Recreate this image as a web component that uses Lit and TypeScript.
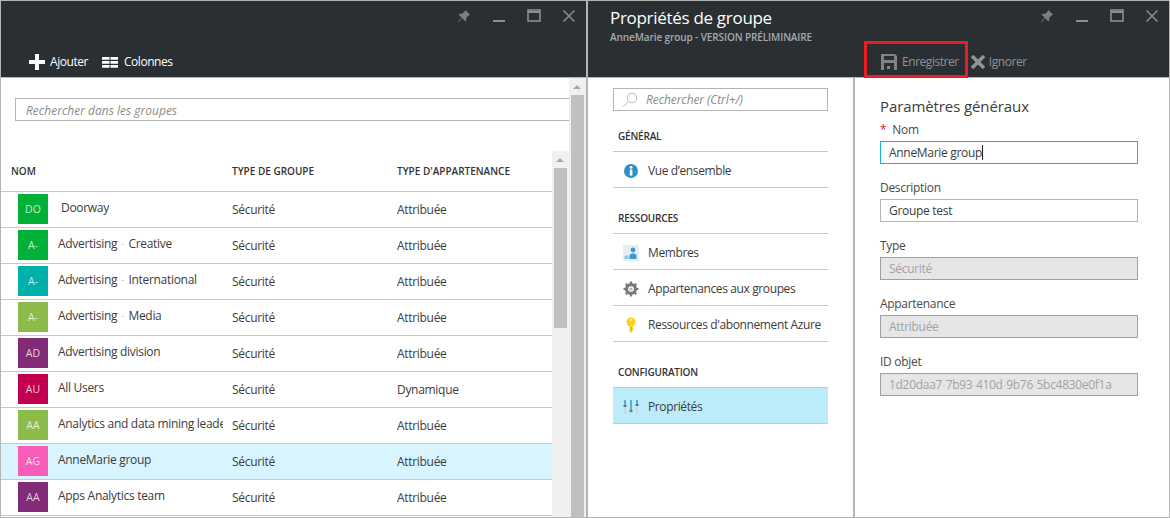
import { LitElement, css, html } from 'lit'
import { customElement } from 'lit/decorators.js'

interface Group {
  initials: string
  color: string
  name: string
  membership: string
  lead?: boolean
  selected?: boolean
}

const GROUPS: Group[] = [
  { initials: 'DO', color: '#00b137', name: 'Doorway', membership: 'Attribuée', lead: true },
  { initials: 'A-', color: '#00b137', name: 'Advertising - Creative', membership: 'Attribuée' },
  { initials: 'A-', color: '#00b0ad', name: 'Advertising - International', membership: 'Attribuée' },
  { initials: 'A-', color: '#8dbb4b', name: 'Advertising - Media', membership: 'Attribuée' },
  { initials: 'AD', color: '#832a78', name: 'Advertising division', membership: 'Attribuée' },
  { initials: 'AU', color: '#c2004f', name: 'All Users', membership: 'Dynamique' },
  { initials: 'AA', color: '#8dbb4b', name: 'Analytics and data mining leaders', membership: 'Attribuée' },
  { initials: 'AG', color: '#f65cb8', name: 'AnneMarie group', membership: 'Attribuée', selected: true },
  { initials: 'AA', color: '#832a78', name: 'Apps Analytics team', membership: 'Attribuée' },
]

const windowControls = html`
  <div class="controls">
    <svg viewBox="0 0 16 16" width="14" height="14" fill="#7b8083">
      <polygon points="9.5,1 15,6.5 13.6,7 10.5,10 10.5,13 9.5,14 6,10.5 1.5,15 1,14.5 5.5,10 2,6.5 3,5.5 6,5.5 9,2.5" />
    </svg>
    <svg viewBox="0 0 14 14" width="14" height="14" fill="#8a8e91"><rect x="1" y="11" width="12" height="2" /></svg>
    <svg viewBox="0 0 14 14" width="14" height="14" fill="none" stroke="#8a8e91">
      <rect x="1" y="1" width="12" height="11" stroke-width="1.6" />
      <rect x="1" y="2" width="12" height="2" fill="#8a8e91" stroke="none" />
    </svg>
    <svg viewBox="0 0 14 14" width="14" height="14" stroke="#8a8e91" stroke-width="1.5">
      <path d="M1.5 1.5 12.5 12.5M12.5 1.5 1.5 12.5" />
    </svg>
  </div>
`

const scrollbar = (thumbHeight: string) => html`
  <div class="scroll">
    <div class="arrow"></div>
    <div class="thumb" style="height:${thumbHeight}"></div>
  </div>
`

const searchIcon = html`
  <svg viewBox="0 0 16 16" width="16" height="16" fill="none" stroke="#b9b9b9">
    <circle cx="10" cy="6" r="4.8" />
    <path d="M6.5 9.5 1 15" />
  </svg>
`

const navIcons = {
  info: html`
    <svg viewBox="0 0 16 16" width="16" height="16">
      <circle cx="8" cy="8" r="7" fill="#2f8fc8" />
      <rect x="6.8" y="6.6" width="2.6" height="6" fill="#fff" />
      <circle cx="8.1" cy="4.4" r="1.4" fill="#fff" />
    </svg>
  `,
  members: html`
    <svg viewBox="0 0 16 16" width="16" height="16">
      <rect width="16" height="16" fill="#e6eef3" />
      <circle cx="10" cy="5" r="2.4" fill="#3a9ad4" />
      <path d="M6.5 14V10l2-1.5h3l2 1.5v4z" fill="#3a9ad4" />
      <path d="M1.5 14v-2.5l1.5-1h1.5l1 1V14z" fill="#8cc4e4" />
    </svg>
  `,
  gear: html`
    <svg viewBox="0 0 16 16" width="16" height="16">
      <circle cx="8" cy="8" r="4.6" fill="none" stroke="#7a7a7a" stroke-width="3" />
      <path d="M8 .5v15M.5 8h15M2.7 2.7l10.6 10.6M13.3 2.7 2.7 13.3" stroke="#7a7a7a" stroke-width="2.2" />
      <circle cx="8" cy="8" r="2.8" fill="#fff" />
      <circle cx="8" cy="8" r="1.6" fill="#b5b5b5" />
    </svg>
  `,
  key: html`
    <svg viewBox="0 0 16 16" width="16" height="16">
      <circle cx="8" cy="5" r="4.5" fill="#fcd116" />
      <path d="M6.5 8h3v6.5L8 16l-1.5-1.5z" fill="#fcd116" />
      <rect x="7" y="2.2" width="2" height="1.6" fill="#fff4b0" />
      <rect x="8" y="10" width="1.5" height="3" fill="#d9a800" />
    </svg>
  `,
  sliders: html`
    <svg viewBox="0 0 16 16" width="16" height="16">
      <path d="M2 1v14M8 1v14M14 1v14" stroke="#c8d4da" stroke-width="1.5" />
      <path d="M2 1v6M8 1v10M14 1v5" stroke="#3a9ad4" stroke-width="1.5" />
      <path d="M.5 7h3M6.5 12h3M12.5 6h3" stroke="#555" stroke-width="1.5" />
    </svg>
  `,
}

// hyphens in the source render very faint, so they get their own span
const faintHyphens = (text: string, sep: string) =>
  text.split(sep).map((part, i) => (i === 0 ? part : html`<span class="faint">${sep}</span>${part}`))

@customElement('app-root')
export class AppRoot extends LitElement {
  private navSection(label: string, rows: { icon: unknown; text: string; active?: boolean }[]) {
    return html`
      <section class="nav-section">
        <div class="nav-label">${label}</div>
        ${rows.map(
          (r) => html`
            <div class="nav-row ${r.active ? 'active' : ''}">
              <span class="nav-icon">${r.icon}</span>${r.text}
            </div>
          `
        )}
      </section>
    `
  }

  private field(label: string, value: unknown, kind = '', required = false) {
    return html`
      <div class="field">
        <div class="field-label">${required ? html`<span class="req">*</span>` : ''}${label}</div>
        <div class="input ${kind}">${value}${kind === 'focus' ? html`<i class="caret"></i>` : ''}</div>
      </div>
    `
  }

  protected render() {
    return html`
      <div class="blade left">
        <header class="head">
          <div class="top">${windowControls}</div>
          <div class="commands">
            <div class="cmd white">
              <svg viewBox="0 0 16 16" width="16" height="16" fill="#fff"><path d="M6 0h4v6h6v4h-6v6H6v-6H0V6h6z" /></svg>
              Ajouter
            </div>
            <div class="cmd white wide">
              <svg viewBox="0 0 16 16" width="16" height="16" fill="#fff">
                <path d="M0 3h7.5v2.8H0zM8.5 3H16v2.8H8.5zM0 7h7.5v2.8H0zM8.5 7H16v2.8H8.5zM0 11h7.5v2.8H0zM8.5 11H16v2.8H8.5z" />
              </svg>
              Colonnes
            </div>
          </div>
        </header>
        <div class="list-body">
          <div class="list-main">
            <div class="list-search">Rechercher dans les groupes</div>
            <div class="table-wrap">
              <div class="table">
                <div class="grid thead">
                  <div class="th-name">NOM</div>
                  <div>TYPE DE GROUPE</div>
                  <div>TYPE D'APPARTENANCE</div>
                </div>
                ${GROUPS.map(
                  (g) => html`
                    <div class="grid row ${g.selected ? 'selected' : ''}">
                      <div class="name-cell">
                        <span class="avatar" style="background:${g.color}">${g.initials}</span>
                        <span class="name ${g.lead ? 'lead' : ''}">${faintHyphens(g.name, ' - ')}</span>
                      </div>
                      <div class="cell">Sécurité</div>
                      <div class="cell">${g.membership}</div>
                    </div>
                  `
                )}
              </div>
              ${scrollbar('160px')}
            </div>
          </div>
          ${scrollbar('100%')}
        </div>
      </div>

      <div class="blade right">
        <header class="head">
          <div class="top">
            <div class="titles">
              <div class="title">Propriétés de groupe</div>
              <div class="subtitle">AnneMarie group - VERSION PRÉLIMINAIRE</div>
            </div>
            ${windowControls}
          </div>
          <div class="commands props">
            <div class="cmd dim">
              <svg viewBox="0 0 16 16" width="16" height="16" fill="#7f8386" fill-rule="evenodd">
                <path d="M0 0h14l2 2v14H0zM3 2v4h10V2zM3 9v7h10V9zM6 12h3v3H6z" />
              </svg>
              Enregistrer
            </div>
            <div class="cmd dim ignore">
              <svg viewBox="0 0 16 16" width="16" height="16" stroke="#8f9396" stroke-width="3.6">
                <path d="M2 2 14 14M14 2 2 14" />
              </svg>
              Ignorer
            </div>
          </div>
          <div class="highlight"></div>
        </header>
        <div class="props-body">
          <nav class="nav">
            <div class="nav-search">${searchIcon}<span>Rechercher (Ctrl+/)</span></div>
            ${this.navSection('GÉNÉRAL', [{ icon: navIcons.info, text: 'Vue d’ensemble' }])}
            ${this.navSection('RESSOURCES', [
              { icon: navIcons.members, text: 'Membres' },
              { icon: navIcons.gear, text: 'Appartenances aux groupes' },
              { icon: navIcons.key, text: "Ressources d'abonnement Azure" },
            ])}
            ${this.navSection('CONFIGURATION', [{ icon: navIcons.sliders, text: 'Propriétés', active: true }])}
          </nav>
          <div class="form">
            <h2 class="form-title">Paramètres généraux</h2>
            ${this.field('Nom', 'AnneMarie group', 'focus', true)}
            ${this.field('Description', 'Groupe test')}
            ${this.field('Type', 'Sécurité', 'disabled')}
            ${this.field('Appartenance', 'Attribuée', 'disabled')}
            ${this.field('ID objet', faintHyphens('1d20daa7-7b93-410d-9b76-5bc4830e0f1a', '-'), 'disabled')}
          </div>
        </div>
      </div>
    `
  }

  static styles = css`
    :host {
      display: flex;
      box-sizing: border-box;
      width: 1170px;
      height: 518px;
      overflow: hidden;
      background: #fff;
      border: 1px solid #b4b4b4;
      font: 12px / 16px 'Open Sans', 'Liberation Sans', sans-serif;
      letter-spacing: -0.3px;
      color: #3c3c3c;
    }
    .blade {
      display: flex;
      flex-direction: column;
      height: 516px;
    }
    .left {
      width: 585px;
      border-right: 2px solid #b4b4b4;
      flex: none;
    }
    .right {
      flex: 1;
      min-width: 0;
    }
    .head {
      position: relative;
      display: flex;
      flex-direction: column;
      flex: none;
      height: 76px;
      background: #2a2f33;
      border-bottom: 1px solid #b4b4b4;
    }
    .top {
      display: flex;
      justify-content: space-between;
      padding: 8px 10px 0 22px;
    }
    .left .top {
      justify-content: flex-end;
    }
    .controls {
      display: flex;
      gap: 21px;
      height: 14px;
    }
    .titles {
      margin-top: -1px;
    }
    .title {
      font-size: 17px;
      line-height: 20px;
      color: #fff;
    }
    .subtitle {
      margin-top: 3px;
      font-size: 10px;
      line-height: 12px;
      font-weight: 600;
      letter-spacing: -0.1px;
      color: #a6a9ab;
    }
    .commands {
      display: flex;
      gap: 14px;
      margin-top: auto;
      height: 30px;
      padding-left: 28px;
      box-sizing: border-box;
      align-items: center;
      letter-spacing: -0.45px;
    }
    .commands.props {
      gap: 11px;
      padding-left: 293px;
    }
    .cmd {
      display: flex;
      align-items: center;
      gap: 5px;
    }
    .cmd.wide {
      gap: 6px;
    }
    .cmd.ignore {
      gap: 3px;
    }
    .white {
      color: #fff;
    }
    .dim {
      color: #8f9396;
    }
    .highlight {
      position: absolute;
      left: 276px;
      top: 40px;
      width: 98px;
      height: 31px;
      border: 3px solid #ed1c24;
    }
    .list-body {
      display: flex;
      flex: 1;
      min-height: 0;
    }
    .list-main {
      display: flex;
      flex-direction: column;
      flex: 1;
      min-width: 0;
    }
    .list-search {
      box-sizing: border-box;
      flex: none;
      height: 23px;
      margin: 20px 0 30px 14px;
      padding-left: 10px;
      border: 1px solid #b4b4b4;
      border-right: 0;
      font-style: italic;
      letter-spacing: 0;
      line-height: 23px;
      color: #8c8c8c;
    }
    .table-wrap {
      display: flex;
      flex: 1;
      min-height: 0;
    }
    .table {
      flex: 1;
      min-width: 0;
    }
    .grid {
      display: grid;
      grid-template-columns: 231px 165px 1fr;
    }
    .thead {
      height: 41px;
      box-sizing: border-box;
      align-items: center;
      border-bottom: 1px solid #c8c8c8;
      font-size: 10px;
      font-weight: 600;
      letter-spacing: 0;
      color: #333;
    }
    .th-name {
      padding-left: 10px;
    }
    .row {
      height: 36px;
      box-sizing: border-box;
      border-bottom: 1px solid #c8c8c8;
    }
    .selected {
      background: #d8f4fe;
    }
    .name-cell {
      display: flex;
      min-width: 0;
      padding: 2px 9px 0 17px;
      gap: 10px;
    }
    .avatar {
      flex: none;
      width: 30px;
      height: 30px;
      font-size: 10.5px;
      letter-spacing: 0;
      line-height: 30px;
      text-align: center;
      color: rgba(255, 255, 255, 0.78);
    }
    .name {
      overflow: hidden;
      white-space: nowrap;
      line-height: 28px;
    }
    .name.lead {
      padding-left: 3px;
    }
    .cell {
      padding-top: 10px;
    }
    .faint {
      color: #d4d4d4;
      word-spacing: 1px;
    }
    .scroll {
      flex: none;
      width: 17px;
      height: 100%;
      display: flex;
      flex-direction: column;
      background: #f0f0f0;
    }
    .arrow {
      flex: none;
      width: 0;
      height: 0;
      margin: 7px 0 6px 4px;
      border: 4px solid transparent;
      border-top: 0;
      border-bottom: 4px solid #a6a6a6;
    }
    .thumb {
      width: 13px;
      margin-left: 2px;
      background: #c0c0c0;
    }
    .props-body {
      display: flex;
      flex: 1;
      min-height: 0;
    }
    .nav {
      flex: none;
      width: 215px;
      padding: 10px 25px 0;
      border-right: 2px solid #b4b4b4;
    }
    .nav-search {
      display: flex;
      align-items: center;
      box-sizing: border-box;
      height: 23px;
      padding-left: 8px;
      gap: 8px;
      border: 1px solid #b4b4b4;
      font-style: italic;
      letter-spacing: -0.1px;
      color: #8c8c8c;
    }
    .nav-section {
      margin-top: 5px;
    }
    .nav-section:first-of-type {
      margin-top: 0;
    }
    .nav-label {
      box-sizing: border-box;
      height: 41px;
      padding: 17px 0 0 5px;
      border-bottom: 1px solid #c8c8c8;
      font-size: 10px;
      font-weight: 600;
      letter-spacing: -0.2px;
      color: #333;
    }
    .nav-row {
      display: flex;
      align-items: center;
      box-sizing: border-box;
      height: 36px;
      padding-top: 2px;
      border-bottom: 1px solid #c8c8c8;
      white-space: nowrap;
      letter-spacing: -0.38px;
    }
    .nav-row.active {
      background: #bcecfa;
    }
    .nav-icon {
      display: flex;
      width: 35px;
      padding-left: 10px;
      box-sizing: border-box;
    }
    .form {
      flex: 1;
      padding: 18px 0 0 25px;
    }
    .form-title {
      margin: 0 0 6px;
      font-size: 15px;
      font-weight: 400;
      letter-spacing: -0.1px;
      line-height: 20px;
      color: #3c3c3c;
    }
    .field {
      width: 258px;
      margin-bottom: 16px;
    }
    .field-label {
      margin-bottom: 3px;
      color: #4a4a4a;
    }
    .req {
      margin-right: 6px;
      color: #e81123;
    }
    .input {
      display: flex;
      align-items: center;
      box-sizing: border-box;
      height: 23px;
      padding-left: 8px;
      border: 1px solid #b4b4b4;
      white-space: pre;
    }
    .input.focus {
      border-color: #17b2e6;
    }
    .input.disabled {
      background: #e6e6e6;
      border-color: #a0a0a0;
      color: #a3a3a3;
    }
    .caret {
      width: 1px;
      height: 15px;
      background: #222;
    }
  `
}

declare global {
  interface HTMLElementTagNameMap {
    'app-root': AppRoot
  }
}
